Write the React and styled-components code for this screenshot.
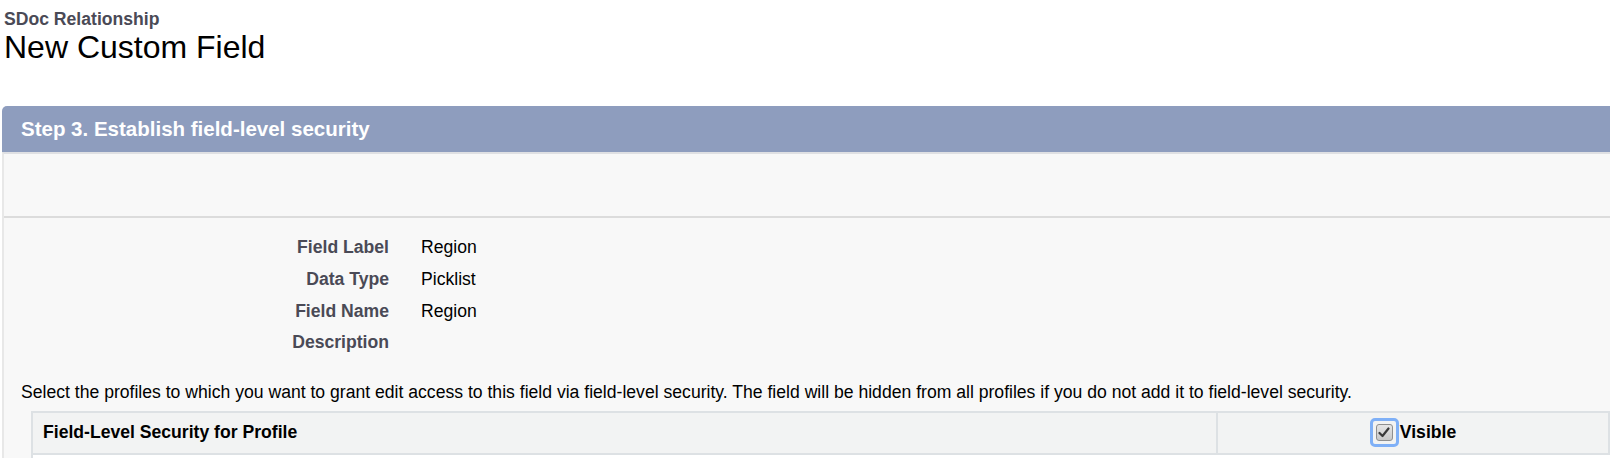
import styled, { createGlobalStyle } from "styled-components";

const GlobalStyle = createGlobalStyle`
  body {
    margin: 0;
    background: #ffffff;
    font-family: "Liberation Sans", Arial, sans-serif;
    color: #000000;
  }
`;

const PageHeader = styled.div`
  padding: 9px 0 0 4px;
  height: 106px;
  box-sizing: border-box;
`;

const PageType = styled.div`
  font-size: 17.6px;
  font-weight: bold;
  line-height: 20px;
  color: #4a4a56;
`;

const PageTitle = styled.h1`
  margin: 0;
  font-size: 32px;
  font-weight: normal;
  line-height: 36px;
  color: #000000;
`;

const Block = styled.div`
  margin-left: 2px;
`;

const BlockHeader = styled.div`
  height: 46px;
  display: flex;
  align-items: center;
  padding-left: 19px;
  background: #8e9dbe;
  border-top-left-radius: 5px;
`;

const BlockTitle = styled.h2`
  margin: 0;
  font-size: 20.5px;
  font-weight: bold;
  color: #ffffff;
`;

const BlockBody = styled.div`
  background: #f8f8f8;
  border-top: 2px solid #dfe0e3;
  border-left: 2px solid #e8e8e8;
`;

const ButtonRow = styled.div`
  height: 62px;
  border-bottom: 2px solid #dcdcdc;
`;

const Details = styled.dl`
  margin: 0;
  padding-top: 14px;
  display: grid;
  grid-template-columns: 385px 1fr;
  grid-auto-rows: 31.7px;
  column-gap: 32px;
  align-items: center;
  font-size: 17.6px;
`;

const Label = styled.dt`
  text-align: right;
  font-weight: bold;
  color: #4a4a56;
`;

const Value = styled.dd`
  margin: 0;
  color: #000000;
`;

const Instructions = styled.p`
  margin: 23px 0 9px 0;
  padding-left: 17px;
  font-size: 17.6px;
  line-height: 20px;
  color: #000000;
`;

const Table = styled.table`
  margin-left: 27px;
  width: calc(100% - 27px);
  border-collapse: collapse;
  background: #ffffff;
  font-size: 17.6px;
`;

const HeadCell = styled.th`
  height: 40px;
  padding: 0 10px;
  background: #f2f3f3;
  border: 2px solid #dde1e4;
  font-weight: bold;
  color: #000000;
  text-align: ${(p) => (p.$center ? "center" : "left")};
  width: ${(p) => p.$width || "auto"};
`;

const CheckLabel = styled.span`
  display: inline-flex;
  align-items: center;
`;

const CheckRing = styled.span`
  width: 29px;
  height: 29px;
  box-sizing: border-box;
  border: 3px solid #7fb0f7;
  border-radius: 5px;
  display: inline-flex;
  align-items: center;
  justify-content: center;
  margin-right: 1px;
`;

const CheckBox = styled.span`
  width: 17px;
  height: 17px;
  box-sizing: border-box;
  border: 1px solid #8f8f8f;
  border-radius: 3px;
  background: linear-gradient(#e6e6e6, #c8c8c8);
  display: inline-flex;
  align-items: center;
  justify-content: center;
`;

const EmptyRow = styled.td`
  height: 10px;
  background: #ffffff;
  border-left: 2px solid #dde1e4;
`;

function Checkmark() {
  return (
    <svg width="12" height="11" viewBox="0 0 12 11">
      <path d="M1.5 6 L4.5 9 L10.5 1.5" fill="none" stroke="#3a3a3a" strokeWidth="2.2" strokeLinecap="round" strokeLinejoin="round" />
    </svg>
  );
}

const fields = [
  ["Field Label", "Region"],
  ["Data Type", "Picklist"],
  ["Field Name", "Region"],
  ["Description", ""],
];

export default function App() {
  return (
    <>
      <GlobalStyle />
      <PageHeader>
        <PageType>SDoc Relationship</PageType>
        <PageTitle>New Custom Field</PageTitle>
      </PageHeader>
      <Block>
        <BlockHeader>
          <BlockTitle>Step 3. Establish field-level security</BlockTitle>
        </BlockHeader>
        <BlockBody>
          <ButtonRow />
          <Details>
            {fields.map(([label, value]) => (
              <>
                <Label key={label}>{label}</Label>
                <Value key={label + "-v"}>{value}</Value>
              </>
            ))}
          </Details>
          <Instructions>
            Select the profiles to which you want to grant edit access to this field via field-level security. The field will be hidden from all profiles if you do not add it to field-level security.
          </Instructions>
          <Table>
            <thead>
              <tr>
                <HeadCell $width="1163px">Field-Level Security for Profile</HeadCell>
                <HeadCell $center>
                  <CheckLabel>
                    <CheckRing>
                      <CheckBox>
                        <Checkmark />
                      </CheckBox>
                    </CheckRing>
                    Visible
                  </CheckLabel>
                </HeadCell>
              </tr>
            </thead>
            <tbody>
              <tr>
                <EmptyRow colSpan={2} />
              </tr>
            </tbody>
          </Table>
        </BlockBody>
      </Block>
    </>
  );
}
